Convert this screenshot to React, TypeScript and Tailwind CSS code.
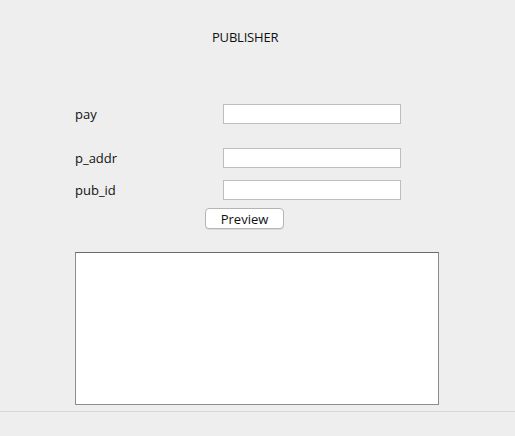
export default function App() {
  const fields = [
    { label: "pay", mt: "mt-[61px]" },
    { label: "p_addr", mt: "mt-[24px]" },
    { label: "pub_id", mt: "mt-[12px]" },
  ];

  return (
    <div className="w-[515px] h-[436px] bg-[#eeeeee] text-[13px] text-[#111111] font-['Open_Sans',sans-serif] overflow-hidden">
      <div className="pt-[25px] pl-[212px] h-[43px] leading-[24px] tracking-[-0.2px]">PUBLISHER</div>

      {fields.map((f) => (
        <div key={f.label} className={`${f.mt} flex items-center pl-[75px] h-[20px]`}>
          <span className="w-[148px] pt-[2px]">{f.label}</span>
          <input
            type="text"
            className="w-[178px] h-[20px] bg-white border border-[#bdbdbd] outline-none"
          />
        </div>
      ))}

      <div className="mt-[8px] pl-[205px] flex h-[21px]">
        <button className="w-[79px] h-[21px] bg-white border border-[#b5b5b5] rounded-[4px] leading-[18px] pt-[1px] shadow-[0_1px_0_rgba(0,0,0,0.08)]">
          Preview
        </button>
      </div>

      <div className="mt-[23px] ml-[75px] w-[364px] h-[153px] bg-white border border-[#8c8c8c] border-t-[#6a6a6a]" />

      <div className="mt-[6px] border-t border-[#d6d6d6]" />
    </div>
  );
}
